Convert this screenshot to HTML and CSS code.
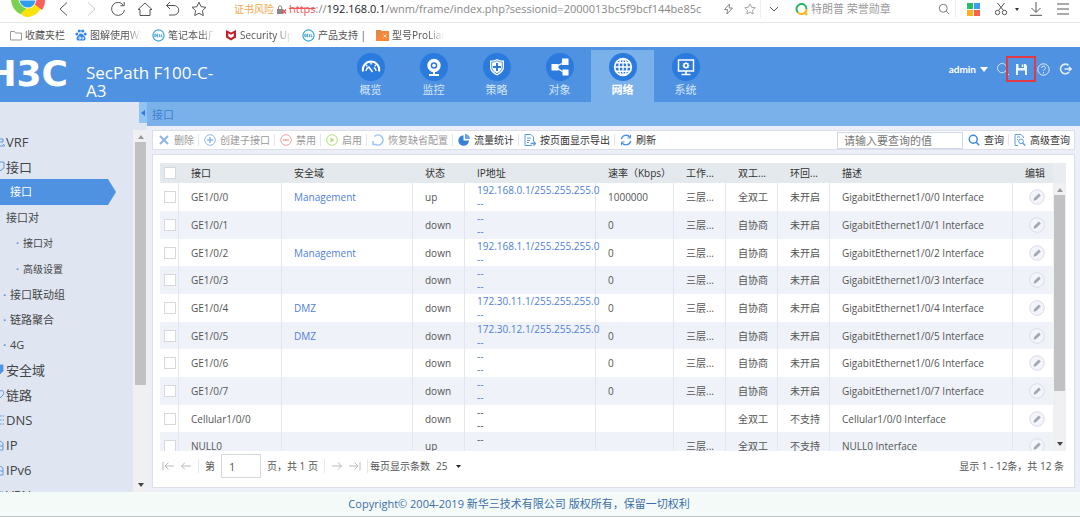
FILE: index.html
```html
<!DOCTYPE html>
<html lang="zh-CN">
<head>
<meta charset="utf-8">
<title>SecPath F100-C-A3</title>
<link rel="stylesheet" href="styles.css">
</head>
<body>
<svg class="defs" aria-hidden="true">
  <symbol id="star" viewBox="0 0 16 16"><path d="M8 1.2l2.1 4.5 4.9.6-3.6 3.4.9 4.9L8 12.2l-4.3 2.4.9-4.9L1 6.3l4.9-.6z"/></symbol>
  <symbol id="dell" viewBox="0 0 14 14"><circle cx="7" cy="7" r="6" fill="#fff" stroke="#3aa5dc" stroke-width="1.3"/><path d="M3 5.6v2.8h.8l.7-1.4-.7-1.4zM6.7 5.6H5.4v2.8h1.3M5.4 7h1M8 5.600v2.800h1M10 5.600v2.800h1.300" fill="none" stroke="#2b94d0" stroke-width=".9"/></symbol>
  <symbol id="pencil" viewBox="0 0 16 16"><circle cx="8" cy="8" r="7.300" fill="#f3f5fa" stroke="#d9dde8"/><path d="M4.500 11.700l.7-2.700 4.600-4.600 2 2-4.600 4.600z" fill="#a3a7b2"/></symbol>
  <symbol id="lens" viewBox="0 0 16 16"><circle cx="7" cy="7" r="5.300"/><path d="M11 11l4 4"/></symbol>
</svg>

<div class="browser-bar">
  <div class="browser-logo"><svg width="36" height="18" viewBox="0 0 36 18"><path d="M2 0h15v15C9 15 3 9 2 0z" fill="#78d24c"/><path d="M12 13l12-10 10-3c0 9-7 17-16 17-3 0-5-2-6-4z" fill="#fbe20f"/><path d="M24 0h12c0 4-1 7-3 10L24 3z" fill="#f9605b"/><path d="M10 0h17c-1 5-4 8-8 8s-8-3-9-8z" fill="#2f9df0" stroke="#fff"/></svg></div>
  <button class="slot" aria-label="后退"><svg width="14" height="16" viewBox="0 0 14 16"><path d="M10 1.500L3 8l7 6.500"/></svg></button>
  <button class="slot faint" aria-label="前进"><svg width="14" height="16" viewBox="0 0 14 16"><path d="M4 1.500L11 8l-7 6.500"/></svg></button>
  <button class="slot" aria-label="刷新页面"><svg width="16" height="16" viewBox="0 0 16 16"><path d="M13.300 4A6.500 6.500 0 1 0 14.500 9M14.200 1v3.700h-3.800"/></svg></button>
  <button class="slot" aria-label="主页"><svg width="16" height="16" viewBox="0 0 16 16"><path d="M1 8.500L8 2l7 6.500h-2V14.500H3V8.500z"/></svg></button>
  <button class="slot" aria-label="恢复"><svg width="16" height="16" viewBox="0 0 16 16"><path d="M6 1L2.500 4.500 6 8M2.500 4.500H10a4.700 4.700 0 0 1 0 9.500H5"/></svg></button>
  <button class="slot" aria-label="收藏"><svg width="16" height="16"><use href="#star"/></svg></button>
  <div class="address">
    <span class="risk">证书风险</span>
    <svg class="lock" width="11" height="11" viewBox="0 0 11 11"><path d="M1 5h6v5H1z" fill="#888" stroke="none"/><path d="M2.500 5V3a1.700 1.700 0 0 1 3.200 0v2" stroke="#888"/><path d="M6.500 5.500l3.500 4M10 5.500l-3.500 4" stroke="#f05050" stroke-width="1.300"/></svg>
    <span class="url"><s>https</s>://<b>192.168.0.1</b>/wnm/frame/index.php?sessionid=2000013bc5f9bcf144be85c</span>
  </div>
  <button class="slot small" aria-label="极速"><svg width="11" height="12" viewBox="0 0 11 12"><path d="M6.500 1L1.500 6.500h3L4 11l5.500-6h-3.300z"/></svg></button>
  <button class="slot small" aria-label="收藏网页"><svg width="12" height="12"><use href="#star"/></svg></button>
  <button class="slot divided" aria-label="展开"><svg width="10" height="8" viewBox="0 0 10 8"><path d="M1 2l4 4 4-4"/></svg></button>
  <div class="search">
    <svg width="14" height="13" viewBox="0 0 14 13"><path d="M3 9.500A5 5 0 1 1 11.500 6" stroke="#29b765" stroke-width="2"/><path d="M11.500 6a5 5 0 0 1-8.500 3.500M9.500 9.500l2.500 2.500" stroke="#fbb51a" stroke-width="2"/></svg>
    <input type="text" aria-label="搜索" placeholder="特朗普 荣誉勋章">
    <svg width="12" height="12"><use href="#lens"/></svg>
  </div>
  <button class="slot divided wide" aria-label="应用"><svg width="13" height="13" viewBox="0 0 13 13" stroke="none"><path d="M0 0h6v6H0z" fill="#27bd62"/><path d="M7 0h6v6H7z" fill="#3c9df5"/><path d="M0 7h6v6H0z" fill="#fdb321"/><path d="M7 7h6v6H7z" fill="#f5634a"/></svg></button>
  <button class="slot cut" aria-label="截图"><svg width="14" height="14" viewBox="0 0 14 14"><circle cx="3.500" cy="10.500" r="2.200"/><circle cx="10.500" cy="10.500" r="2.200"/><path d="M4.500 8.500L10.500 1M9.500 8.500L3.500 1"/></svg></button>
  <button class="slot tiny" aria-label="更多截图"><svg width="4" height="3" viewBox="0 0 4 3"><path d="M0 0h4L2 3z" fill="#333" stroke="none"/></svg></button>
  <button class="slot" aria-label="下载"><svg width="14" height="14" viewBox="0 0 14 14"><path d="M7 0v10M2.500 6L7 10.500 11.500 6M1 13.300h12"/></svg></button>
  <button class="slot" aria-label="菜单"><svg width="12" height="12" viewBox="0 0 12 12"><path d="M0 1h12M0 6h12M0 11h12"/></svg></button>
</div>

<nav class="bookmarks" aria-label="收藏夹栏">
  <a href="#"><svg width="12" height="11" viewBox="0 0 12 11"><path d="M.5 1.500h4l1 1.500h6v7H.5z" stroke="#999"/></svg><span>收藏夹栏</span></a>
  <a href="#"><svg width="12" height="12" viewBox="0 0 12 12"><g fill="#3587f0"><circle cx="1.800" cy="5" r="1.500"/><circle cx="4.300" cy="2" r="1.600"/><circle cx="7.700" cy="2" r="1.600"/><circle cx="10.200" cy="5" r="1.500"/><path d="M6 4.500c2 0 2.500 2 3.800 3.200 1.400 1.500.6 3.800-1.300 3.800H3.500c-1.900 0-2.700-2.300-1.300-3.800C3.500 6.500 4 4.500 6 4.500z"/></g><path d="M4 8h1.500v2H4zM7 8v2h1.500V8" stroke="#fff" stroke-width=".7"/></svg><span class="fade long">图解使用WS</span></a>
  <a href="#"><svg width="13" height="13"><use href="#dell"/></svg><span class="fade">笔记本出厂</span></a>
  <a href="#"><svg width="12" height="12" viewBox="0 0 12 12"><path d="M1 1l5 2.500L11 1v7.500L6 11.500 1 8.500z" fill="#c4202c"/><path d="M3.300 4.300L6 5.700l2.700-1.400v3L6 9 3.300 7.300z" fill="#fff"/></svg><span class="fade long">Security Up</span></a>
  <a href="#"><svg width="13" height="13"><use href="#dell"/></svg><span class="whole">产品支持 |</span></a>
  <a href="#"><svg width="13" height="12" viewBox="0 0 13 12"><path d="M0 1h5l1 1h7v10H0z" fill="#f5883a"/><path d="M0 1h4v6H0z" fill="#d98a4e"/><path d="M7.500 5.500l3 3M10.500 5.500l-3 3" stroke="#ffe0b8"/></svg><span class="fade long">型号ProLian</span></a>
</nav>

<header class="header">
  <div class="brand"><span class="logo">H3C</span></div>
  <h1 class="product">SecPath F100-C-A3</h1>
  <nav class="main-nav" aria-label="主导航">
    <a href="#"><span class="disc"><svg width="20" height="20" viewBox="0 0 20 20"><path d="M2 14.500a8.200 8.200 0 1 1 16 0" stroke-width="2"/><path d="M5 14a5 5 0 0 1 3-4M15 14a5 5 0 0 0-2-3.500M5 8l1.300 1.300M10 5.500v2M15 8l-1.300 1.300M7.500 9.500l4 5.500" stroke-width="1.500"/></svg></span>概览</a>
    <a href="#"><span class="disc"><svg width="20" height="20" viewBox="0 0 20 20"><circle cx="10" cy="8.500" r="5" stroke-width="3.400"/><circle cx="10" cy="8.500" r="1.800" fill="#fff" stroke="none"/><path d="M5 18h10M10 14v4" stroke-width="2"/></svg></span>监控</a>
    <a href="#"><span class="disc"><svg width="20" height="20" viewBox="0 0 20 20"><path d="M3 3.500c3 0 5-.5 7-1.500 2 1 4 1.500 7 1.500V10c0 4-3 6.500-7 8.500C6 16.500 3 14 3 10z" fill="#fff" stroke="none"/><path d="M4.700 5c2.300 0 3.700-.3 5.300-1.200C11.600 4.700 13 5 15.300 5v5c0 3.200-2.300 5-5.300 6.700C7 15 4.700 13.200 4.700 10z" stroke="#2a7bdd" stroke-width=".8"/><path d="M10 6v8M6 10h8" stroke="#2a7bdd" stroke-width="2"/></svg></span>策略</a>
    <a href="#"><span class="disc"><svg width="20" height="20" viewBox="0 0 20 20"><path d="M15 5L5 10l10 6" stroke-width="1.200"/><path d="M1.500 7h7v6.500h-7zM12 1.500h6.500V8H12zM12.500 12.500h6V18.500h-6z" fill="#fff" stroke="none"/></svg></span>对象</a>
    <a href="#" class="current" aria-current="page"><span class="disc"><svg width="20" height="20" viewBox="0 0 20 20"><circle cx="10" cy="10" r="8.300" stroke-width="1.800"/><ellipse cx="10" cy="10" rx="4" ry="8.300" stroke-width="1.400"/><path d="M10 2v16M2 10h16M3.300 5.800h13.400M3.300 14.200h13.400" stroke-width="1.400"/></svg></span>网络</a>
    <a href="#"><span class="disc"><svg width="20" height="20" viewBox="0 0 20 20"><path d="M2.500 3h15v11h-15z" stroke-width="1.500"/><circle cx="10" cy="8.500" r="2" stroke-width="1.700"/><path d="M10 5v7M6.500 8.500h7M7.500 6l5 5M12.500 6l-5 5" stroke-width="1"/><circle cx="10" cy="8.500" r="1.200" fill="#2a7bdd" stroke="none"/><path d="M10 14v3M5.500 17.500h9" stroke-width="1.700"/></svg></span>系统</a>
  </nav>
  <div class="account">
    <button class="user">admin <svg width="8" height="5" viewBox="0 0 8 5"><path d="M0 0h8L4 5z" fill="#fff"/></svg></button>
    <button class="tool" aria-label="搜索"><svg width="14" height="14"><use href="#lens"/></svg></button>
    <button class="tool save" aria-label="保存"><svg width="11" height="11" viewBox="0 0 11 11" stroke="none"><path d="M0 0h9.500L11 1.500V11H0z" fill="#eef5fe"/><path d="M2.500 0h5.500v4H2.500zM2 6.500h7V11H2z" fill="#4f92e1"/><path d="M5.800.5h1.500v2.500H5.800z" fill="#fff"/></svg></button>
    <button class="tool" aria-label="帮助"><svg width="13" height="13" viewBox="0 0 13 13"><circle cx="6.500" cy="6.500" r="5.700"/><path d="M4.600 5a1.900 1.900 0 1 1 2.600 1.700c-.5.300-.7.500-.7 1.200M6.500 9v1.300"/></svg></button>
    <button class="tool" aria-label="退出"><svg width="13" height="12" viewBox="0 0 13 12"><path d="M9.500 2.300A4.800 4.800 0 1 0 10 9M5.500 6H12M10 4l2 2-2 2" stroke-width="1.600"/></svg></button>
  </div>
</header>

<div class="workspace">
  <aside class="sidebar">
    <ul class="menu">
      <li class="top"><a href="#"><svg width="6" height="12" viewBox="0 0 6 12"><path d="M0 3h3v3H0M0 10h4M3 8l2 2"/></svg>VRF</a></li>
      <li class="top"><a href="#"><svg width="6" height="12" viewBox="0 0 6 12"><path d="M0 1h4v6L0 10"/></svg>接口</a></li>
      <li class="leaf active"><a href="#">接口</a></li>
      <li class="group"><a href="#">接口对</a></li>
      <li class="sub"><a href="#">接口对</a></li>
      <li class="sub"><a href="#">高级设置</a></li>
      <li class="leaf"><a href="#">接口联动组</a></li>
      <li class="leaf"><a href="#">链路聚合</a></li>
      <li class="leaf"><a href="#">4G</a></li>
      <li class="top"><a href="#"><svg width="6" height="12" viewBox="0 0 6 12"><path d="M0 1h3v6L0 10z" fill="#4f92e1"/></svg>安全域</a></li>
      <li class="top"><a href="#"><svg width="6" height="12" viewBox="0 0 6 12"><path d="M0 2c4-2 5 3 2 5L0 9"/></svg>链路</a></li>
      <li class="top"><a href="#"><svg width="6" height="12" viewBox="0 0 6 12"><path d="M0 2h4M0 6h4M0 10h4" stroke-dasharray="1.500 1"/></svg>DNS</a></li>
      <li class="top"><a href="#"><svg width="6" height="12" viewBox="0 0 6 12"><path d="M0 2l3 2v7H0M0 7h3"/></svg>IP</a></li>
      <li class="top"><a href="#"><svg width="6" height="12" viewBox="0 0 6 12"><path d="M0 2l3 2v7H0M0 7h3"/></svg>IPv6</a></li>
      <li class="top"><a href="#"><svg width="6" height="12" viewBox="0 0 6 12"><path d="M0 3h3v3H0"/></svg>VPN</a></li>
    </ul>
    <div class="rail">
      <button class="collapse" aria-label="收起菜单"><svg width="4" height="6" viewBox="0 0 4 6"><path d="M4 0v6L0 3z" fill="#2f7ad6"/></svg></button>
      <div class="scrollbar"><svg width="6" height="4" viewBox="0 0 6 4"><path d="M0 4h6L3 0z" fill="#999"/></svg><span class="thumb side-thumb"></span><svg class="down" width="6" height="4" viewBox="0 0 6 4"><path d="M0 0h6L3 4z" fill="#444"/></svg></div>
    </div>
  </aside>

  <main class="content">
    <div class="crumb">接口</div>
    <div class="toolbar panel">
      <div class="actions">
        <button disabled><svg width="12" height="12" viewBox="0 0 12 12" stroke="#8db6e6" stroke-width="2"><path d="M2 2l8 8M10 2l-8 8"/></svg>删除</button>
        <button disabled><svg width="12" height="12" viewBox="0 0 12 12" stroke="#8fb9e8"><circle cx="6" cy="6" r="5.300"/><path d="M6 3v6M3 6h6" stroke-width="1.500"/></svg>创建子接口</button>
        <button disabled><svg width="12" height="12" viewBox="0 0 12 12" stroke="#f0a0a4"><circle cx="6" cy="6" r="5.300"/><path d="M3 6h6" stroke-width="1.500"/></svg>禁用</button>
        <button disabled><svg width="12" height="12" viewBox="0 0 12 12" stroke="#b5dd7c"><circle cx="6" cy="6" r="5.300"/><path d="M4.500 3.500v5L8.500 6z" fill="#b5dd7c" stroke="none"/></svg>启用</button>
        <button disabled><svg width="12" height="12" viewBox="0 0 12 12" stroke="#9dc3ee" stroke-width="1.500"><path d="M2.500 2.500a5 5 0 1 1 .5 7.500M1 7v3.500h3.500"/></svg>恢复缺省配置</button>
        <button><svg width="12" height="12" viewBox="0 0 12 12"><path d="M5.500 1.200V6.500h5.400A5.300 5.300 0 1 1 5.500 1.200z" fill="#3b80d8"/><path d="M7 0a5 5 0 0 1 5 5H7z" fill="#6ba4e8"/></svg>流量统计</button>
        <button><svg width="12" height="12" viewBox="0 0 12 12" stroke="#5c9be4"><path d="M8 11.500H1V.500h6L9.500 3v4M3 4h4M3 6.500h3M3 8.500h2"/><path d="M6.500 9.500h5M9.500 7.500l2 2-2 2" stroke-width="1.300"/></svg>按页面显示导出</button>
        <button><svg width="12" height="12" viewBox="0 0 12 12" stroke="#4d91e0" stroke-width="1.400"><path d="M1.300 5A4.900 4.900 0 0 1 10 3.200M10.700 7A4.900 4.900 0 0 1 2 8.800"/><path d="M10.500.8V4H7.500M1.500 11.200V8h3" stroke-width="1"/></svg>刷新</button>
      </div>
      <div class="actions query">
        <input type="text" aria-label="查询" placeholder="请输入要查询的值">
        <button><svg width="12" height="12" stroke="#3e87dc" stroke-width="2"><use href="#lens"/></svg>查询</button>
        <button><svg width="12" height="12" viewBox="0 0 12 12" stroke="#5c9be4"><path d="M4 11.500H1V.500h6L9.500 3v1M3 3h3M3 5.500h1"/><circle cx="7" cy="7.300" r="2.300"/><path d="M8.700 9l2.500 2.500" stroke-width="1.500"/></svg>高级查询</button>
      </div>
    </div>

    <section class="grid panel">
      <div class="viewport">
        <div class="clip">
          <table>
            <colgroup><col class="c-check"><col class="c-name"><col class="c-zone"><col class="c-state"><col class="c-ip"><col class="c-rate"><col class="c-mode"><col class="c-mode"><col class="c-mode"><col><col class="c-edit"></colgroup>
            <thead><tr><th><input type="checkbox" aria-label="全选"></th><th>接口</th><th>安全域</th><th>状态</th><th>IP地址</th><th>速率（Kbps）</th><th>工作...</th><th>双工...</th><th>环回...</th><th>描述</th><th class="edit">编辑</th></tr></thead>
            <tbody>
              <tr><td><input type="checkbox" aria-label="GE1/0/0"></td><td>GE1/0/0</td><td><a href="#">Management</a></td><td>up</td><td class="ip"><a href="#">192.168.0.1/255.255.255.0</a><a href="#">--</a></td><td>1000000</td><td>三层...</td><td>全双工</td><td>未开启</td><td>GigabitEthernet1/0/0 Interface</td><td class="edit"><button aria-label="编辑"><svg width="16" height="16"><use href="#pencil"/></svg></button></td></tr>
              <tr><td><input type="checkbox" aria-label="GE1/0/1"></td><td>GE1/0/1</td><td></td><td>down</td><td class="ip"><a href="#">--</a><a href="#">--</a></td><td>0</td><td>三层...</td><td>自协商</td><td>未开启</td><td>GigabitEthernet1/0/1 Interface</td><td class="edit"><button aria-label="编辑"><svg width="16" height="16"><use href="#pencil"/></svg></button></td></tr>
              <tr><td><input type="checkbox" aria-label="GE1/0/2"></td><td>GE1/0/2</td><td><a href="#">Management</a></td><td>down</td><td class="ip"><a href="#">192.168.1.1/255.255.255.0</a><a href="#">--</a></td><td>0</td><td>三层...</td><td>自协商</td><td>未开启</td><td>GigabitEthernet1/0/2 Interface</td><td class="edit"><button aria-label="编辑"><svg width="16" height="16"><use href="#pencil"/></svg></button></td></tr>
              <tr><td><input type="checkbox" aria-label="GE1/0/3"></td><td>GE1/0/3</td><td></td><td>down</td><td class="ip"><a href="#">--</a><a href="#">--</a></td><td>0</td><td>三层...</td><td>自协商</td><td>未开启</td><td>GigabitEthernet1/0/3 Interface</td><td class="edit"><button aria-label="编辑"><svg width="16" height="16"><use href="#pencil"/></svg></button></td></tr>
              <tr><td><input type="checkbox" aria-label="GE1/0/4"></td><td>GE1/0/4</td><td><a href="#">DMZ</a></td><td>down</td><td class="ip"><a href="#">172.30.11.1/255.255.255.0</a><a href="#">--</a></td><td>0</td><td>三层...</td><td>自协商</td><td>未开启</td><td>GigabitEthernet1/0/4 Interface</td><td class="edit"><button aria-label="编辑"><svg width="16" height="16"><use href="#pencil"/></svg></button></td></tr>
              <tr><td><input type="checkbox" aria-label="GE1/0/5"></td><td>GE1/0/5</td><td><a href="#">DMZ</a></td><td>down</td><td class="ip"><a href="#">172.30.12.1/255.255.255.0</a><a href="#">--</a></td><td>0</td><td>三层...</td><td>自协商</td><td>未开启</td><td>GigabitEthernet1/0/5 Interface</td><td class="edit"><button aria-label="编辑"><svg width="16" height="16"><use href="#pencil"/></svg></button></td></tr>
              <tr><td><input type="checkbox" aria-label="GE1/0/6"></td><td>GE1/0/6</td><td></td><td>down</td><td class="ip"><a href="#">--</a><a href="#">--</a></td><td>0</td><td>三层...</td><td>自协商</td><td>未开启</td><td>GigabitEthernet1/0/6 Interface</td><td class="edit"><button aria-label="编辑"><svg width="16" height="16"><use href="#pencil"/></svg></button></td></tr>
              <tr><td><input type="checkbox" aria-label="GE1/0/7"></td><td>GE1/0/7</td><td></td><td>down</td><td class="ip"><a href="#">--</a><a href="#">--</a></td><td>0</td><td>三层...</td><td>自协商</td><td>未开启</td><td>GigabitEthernet1/0/7 Interface</td><td class="edit"><button aria-label="编辑"><svg width="16" height="16"><use href="#pencil"/></svg></button></td></tr>
              <tr><td><input type="checkbox" aria-label="Cellular1/0/0"></td><td>Cellular1/0/0</td><td></td><td>down</td><td class="ip plain"><span>--</span><span>--</span></td><td></td><td></td><td>全双工</td><td>不支持</td><td>Cellular1/0/0 Interface</td><td class="edit"><button aria-label="编辑"><svg width="16" height="16"><use href="#pencil"/></svg></button></td></tr>
              <tr><td><input type="checkbox" aria-label="NULL0"></td><td>NULL0</td><td></td><td>up</td><td class="ip plain"><span>--</span><span>--</span></td><td></td><td>三层...</td><td>全双工</td><td>不支持</td><td>NULL0 Interface</td><td class="edit"><button aria-label="编辑"><svg width="16" height="16"><use href="#pencil"/></svg></button></td></tr>
            </tbody>
          </table>
        </div>
        <div class="grid-rail"><div class="scrollbar"><svg width="6" height="4" viewBox="0 0 6 4"><path d="M0 4h6L3 0z" fill="#999"/></svg><span class="thumb grid-thumb"></span><svg class="down" width="6" height="4" viewBox="0 0 6 4"><path d="M0 0h6L3 4z" fill="#444"/></svg></div></div>
      </div>
      <div class="pager">
        <button aria-label="首页"><svg width="12" height="10" viewBox="0 0 12 10"><path d="M1 1v8M12 5H3M6.500 1.500L3 5l3.500 3.500"/></svg></button>
        <button aria-label="上一页"><svg width="12" height="10" viewBox="0 0 12 10"><path d="M11 5H1.500M5 1.500L1.500 5 5 8.500"/></svg></button>
        <i></i>
        <label for="page">第</label><input id="page" type="text" value="1"><span>页，共 1 页</span>
        <i></i>
        <button aria-label="下一页"><svg width="12" height="10" viewBox="0 0 12 10"><path d="M1 5h9.500M7 1.500L10.500 5 7 8.500"/></svg></button>
        <button aria-label="末页"><svg width="12" height="10" viewBox="0 0 12 10"><path d="M11 1v8M0 5h9M5.500 1.500L9 5 5.500 8.500"/></svg></button>
        <i></i>
        <label for="size">每页显示条数</label>
        <span class="size"><select id="size"><option>25</option><option>50</option></select><svg width="5" height="3" viewBox="0 0 5 3"><path d="M0 0h5L2.500 3z" fill="#222" stroke="none"/></svg></span>
        <span class="summary">显示 1 - 12条，共 12 条</span>
      </div>
    </section>
  </main>
</div>

<footer class="footer">Copyright© 2004-2019 新华三技术有限公司 版权所有，保留一切权利</footer>
</body>
</html>
```

FILE: styles.css
```css
* { box-sizing: border-box; }

body {
  margin: 0;
  height: 100vh;
  display: flex;
  flex-direction: column;
  overflow: hidden;
  background: #fff;
  color: #555;
  font: 10px/14px "Open Sans", "Noto Sans CJK SC", sans-serif;
}

button, input, select {
  margin: 0;
  padding: 0;
  border: 0;
  background: none;
  color: inherit;
  font: inherit;
}

a { color: inherit; text-decoration: none; }
svg { display: block; flex: none; fill: none; }
.defs { position: absolute; width: 0; height: 0; }

/* Browser chrome */
.browser-bar {
  flex: none;
  display: flex;
  align-items: center;
  height: 23px;
  padding: 0 4px 4px 0;
  border-bottom: 1px solid #e6e6e6;
  stroke: #555;
}
.browser-logo { width: 50px; height: 18px; padding-left: 9px; stroke: none; }
.slot {
  width: 27px;
  height: 18px;
  display: flex;
  align-items: center;
  justify-content: center;
  flex: none;
}
.slot.faint { stroke: #ccc; }
.slot.small { width: 21px; stroke: #888; }
.slot.cut { width: 22px; }
.slot.tiny { width: 10px; }
.slot.divided { border-left: 1px solid #eee; }
.slot.wide { width: 35px; }
.address {
  flex: 1;
  min-width: 0;
  display: flex;
  align-items: center;
  gap: 2px;
  padding-left: 22px;
  font-size: 11px;
  white-space: nowrap;
}
.risk { color: #f0a850; font-size: 10px; }
.url { color: #888; }
.url s { color: #f0565a; }
.url b { color: #222; font-weight: 400; }
.search {
  width: 168px;
  display: flex;
  align-items: center;
  gap: 2px;
  padding: 0 5px 0 8px;
}
.search input { flex: 1; min-width: 0; font-size: 11px; }
.search input::placeholder { color: #999; }

.bookmarks {
  flex: none;
  display: flex;
  align-items: center;
  gap: 10px;
  height: 24px;
  padding-left: 10px;
}
.bookmarks a { display: flex; align-items: center; gap: 3px; }
.bookmarks span { white-space: nowrap; overflow: hidden; }
.bookmarks .whole { width: 48px; }
.fade { width: 47px; mask-image: linear-gradient(90deg, #000 70%, transparent); }
.fade.long { width: 52px; }

/* Application header */
.header {
  flex: none;
  display: flex;
  height: 55px;
  background: #4f92e1;
  color: #fff;
}
.brand {
  width: 68px;
  padding-top: 8px;
  display: flex;
  justify-content: flex-end;
  overflow: hidden;
}
.logo { font: bold 36px/38px "DejaVu Sans", sans-serif; }
.product {
  width: 136px;
  margin: 17px 0 0 18px;
  font-size: 17px;
  line-height: 18px;
  font-weight: 400;
}
.main-nav { display: flex; margin-left: 117px; padding-top: 3px; }
.main-nav a {
  width: 63px;
  display: flex;
  flex-direction: column;
  align-items: center;
  gap: 1px;
  padding-top: 3px;
  color: #d5e6fa;
  font-size: 11px;
  line-height: 16px;
}
.main-nav .current { background: #7ab1ea; color: #fff; font-weight: 700; }
.disc {
  width: 28px;
  height: 28px;
  display: grid;
  place-items: center;
  border-radius: 50%;
  background: #2a7bdd;
  stroke: #fff;
}
.account {
  margin-left: auto;
  display: flex;
  align-items: center;
  height: 26px;
  margin-top: 9px;
  padding-right: 4px;
  stroke: #e3eefb;
}
.user {
  display: flex;
  align-items: center;
  gap: 4px;
  margin-right: 4px;
  font: bold 10px/14px Lato, sans-serif;
  stroke: none;
}
.tool { width: 22px; height: 26px; display: grid; place-items: center; }
.save { width: 30px; margin-left: -8px; margin-right: -4px; border: 2px solid #e23a45; }

/* Sidebar */
.workspace { flex: 1; min-height: 0; display: flex; background: #eceff8; }
.sidebar { flex: none; width: 147px; display: flex; background: #dfe6f2; overflow: hidden; }
.menu {
  flex: 1;
  margin: 0;
  padding: 27px 0 0;
  list-style: none;
  color: #444;
}
.menu a { display: flex; align-items: center; height: 25px; }
.menu svg { stroke: #5b9ae6; }
.top a { font-size: 13px; }
.leaf a, .group a { font-size: 11px; }
.group a { padding-left: 6px; }
.leaf a::before, .sub a::before { content: "·"; color: #5b8fd6; width: 7px; font-weight: 700; }
.leaf a { padding-left: 3px; }
.sub a { height: 26px; padding-left: 16px; }
.active a {
  width: 116px;
  height: 26px;
  background: #4f92e1;
  color: #fff;
  clip-path: polygon(0 0, 108px 0, 100% 50%, 108px 100%, 0 100%);
}
.active a::before { color: transparent; }
.rail { width: 14px; display: flex; flex-direction: column; align-items: flex-end; }
.collapse { width: 8px; height: 21px; display: grid; place-items: center; background: #8fc4f5; }
.scrollbar {
  flex: 1;
  width: 100%;
  min-height: 0;
  display: flex;
  flex-direction: column;
  align-items: center;
  padding: 5px 0;
  background: #f0f0f2;
}
.rail .scrollbar { margin-top: 7px; padding-left: 1px; }
.thumb { width: 11px; margin-top: 3px; background: #c1c1c3; }
.side-thumb { height: 69%; }
.grid-thumb { height: 76%; }
.down { margin-top: auto; }

/* Content */
.content { flex: 1; min-width: 0; display: flex; flex-direction: column; padding-bottom: 4px; }
.crumb {
  flex: none;
  height: 24px;
  padding-left: 5px;
  background: #7ab1ea;
  color: #3b7fd0;
  font-size: 11px;
  line-height: 25px;
}
.panel { margin: 4px 5px 0; background: #fff; border: 1px solid #dcdfe9; }
.toolbar { flex: none; display: flex; align-items: center; height: 20px; }
.actions { display: flex; align-items: center; color: #333; }
.actions button {
  display: flex;
  align-items: center;
  gap: 4px;
  height: 12px;
  padding: 0 4px 0 5px;
  border-right: 1px solid #e3e6ee;
  white-space: nowrap;
}
.actions button:last-child { border-right: 0; }
.actions button:disabled { color: #999; }
.query { margin-left: auto; }
.query input {
  width: 126px;
  height: 17px;
  padding: 0 6px;
  border: 1px solid #cfd9ea;
  font-size: 11px;
}
.query input::placeholder { color: #777; }

.grid { flex: 1; min-height: 0; display: flex; flex-direction: column; padding: 8px 8px 0 7px; }
.viewport { flex: 1; min-height: 0; display: flex; }
.clip { flex: 1; min-width: 0; overflow: hidden; }
table { width: 100%; border-collapse: separate; border-spacing: 0; table-layout: fixed; }
.c-check { width: 19px; }
.c-name { width: 103px; }
.c-zone { width: 131px; }
.c-state { width: 52px; }
.c-ip { width: 131px; }
.c-rate { width: 78px; }
.c-mode { width: 52px; }
.c-edit { width: 40px; }
th, td {
  padding: 0 0 0 12px;
  text-align: left;
  font-weight: 400;
  white-space: nowrap;
}
th { height: 20px; background: #e4e9ed; color: #333; }
td { height: 28px; border-right: 1px solid #e3e6ee; }
tbody tr:nth-child(3n) td { height: 27px; }
tbody tr:nth-child(even) { background: #eff2f9; }
td:last-child { border-right: 0; }
th:first-child, td:first-child { padding: 0 0 0 4px; }
td a { color: #4f7fd8; }
.ip { line-height: 13px; }
.ip a, .ip span { display: block; }
.edit { padding: 0 4px 0 12px; }
.edit button { display: block; margin-left: 4px; }
input[type="checkbox"] {
  appearance: none;
  display: block;
  width: 12px;
  height: 12px;
  border: 1px solid #d5d8de;
  background: #fff;
}
.grid-rail { width: 13px; display: flex; flex-direction: column; padding-top: 20px; background: #e9ecf0; }

.pager {
  flex: none;
  display: flex;
  align-items: center;
  gap: 6px;
  height: 36px;
  padding: 0 2px 6px;
  stroke: #bbb;
}
.pager i { width: 1px; height: 14px; background: #e6e8ee; }
.pager input { width: 40px; height: 24px; padding-left: 7px; border: 1px solid #d5d8e2; font-size: 11px; }
.pager select { appearance: none; }
.pager button + i + label[for="size"] { margin-left: -4px; }
.size { display: flex; align-items: center; gap: 8px; }
.summary { margin-left: auto; }

.footer {
  flex: none;
  height: 25px;
  padding-right: 42px;
  background: #f4faf8;
  border-bottom: 1px solid #bfc3c3;
  color: #3b6ea8;
  font-size: 11px;
  line-height: 24px;
  text-align: center;
}
```
